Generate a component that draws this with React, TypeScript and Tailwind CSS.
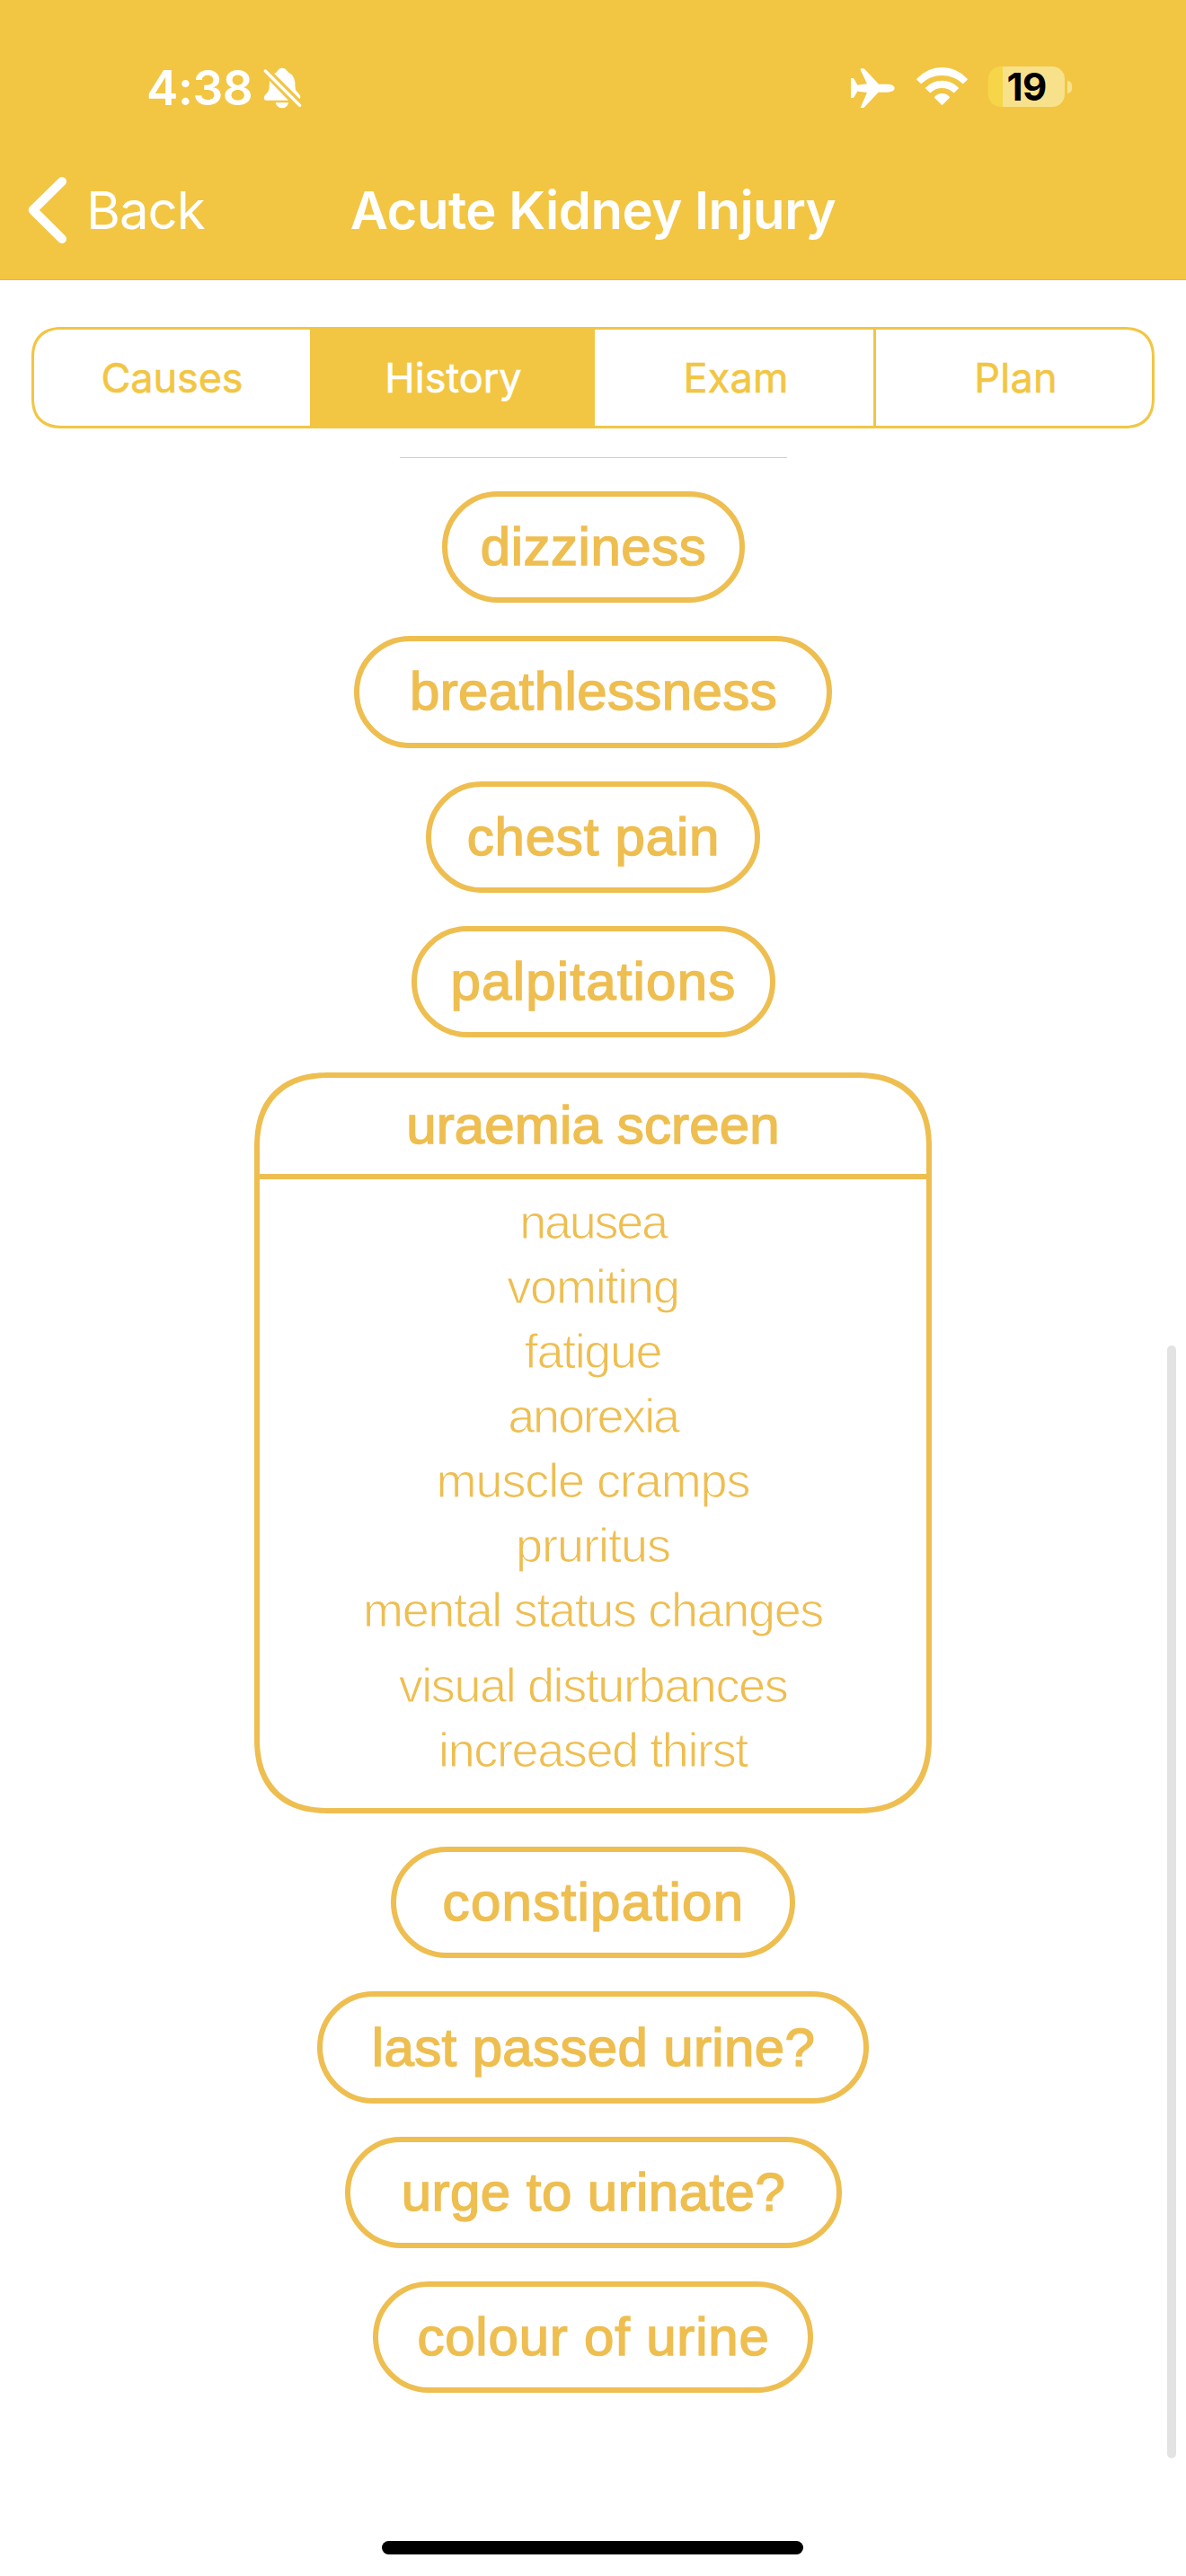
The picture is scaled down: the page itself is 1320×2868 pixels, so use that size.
const tabs = [
  { label: "Causes", cell: "w-[307px] text-[#f2c643]", text: "tracking-[-0.1px]" },
  { label: "History", cell: "w-[317px] bg-[#f2c643] text-white", text: "pl-0.5" },
  { label: "Exam", cell: "w-[313px] border-r-[3px] border-[#f2c643] text-[#f2c643]", text: "pl-1 tracking-[0.2px]" },
  { label: "Plan", cell: "grow text-[#f2c643]", text: "pl-1 tracking-[0.3px]" },
];

const topPills = [
  { label: "dizziness", box: "w-[337px]", text: "tracking-[0.5px]" },
  { label: "breathlessness", box: "w-[532px]", text: "tracking-[0.4px]" },
  { label: "chest pain", box: "w-[372px]", text: "tracking-[0.8px]" },
  { label: "palpitations", box: "w-[405px]", text: "tracking-[1.2px]" },
];

const bottomPills = [
  { label: "constipation", box: "w-[450px]", text: "tracking-[1.3px]" },
  { label: "last passed urine?", box: "w-[614px]", text: "tracking-[0.35px]" },
  { label: "urge to urinate?", box: "w-[553px]", text: "tracking-[0.45px]" },
  { label: "colour of urine", box: "w-[490px]", text: "tracking-[0.8px]" },
];

const symptoms = [
  { label: "nausea", text: "tracking-[-2.3px]" },
  { label: "vomiting", text: "tracking-[-1.2px]" },
  { label: "fatigue", text: "tracking-[-1.4px]" },
  { label: "anorexia", text: "tracking-[-2.2px]" },
  { label: "muscle cramps", text: "tracking-[-1.1px]" },
  { label: "pruritus", text: "tracking-[-1px]" },
  { label: "mental status changes", text: "tracking-[-1.35px]" },
  { label: "visual disturbances", text: "mt-3 tracking-[-1.4px]" },
  { label: "increased thirst", text: "tracking-[-1.4px]" },
];

function Pill({ label, box, text }: { label: string; box: string; text: string }) {
  return (
    <div className={`flex h-[124.3px] items-center justify-center rounded-full border-[6px] border-[#eebe50] ${box}`}>
      <span className={`whitespace-nowrap pl-px text-[60px] leading-none [-webkit-text-stroke:1.5px_#eebe50] ${text}`}>{label}</span>
    </div>
  );
}

function BellOff() {
  return (
    <svg className="h-[46px] w-[43px]" viewBox="880 105 129 138" fill="white">
      <path d="M917 126Q926 121 928 116Q933 107 943 107Q953 107 960 117Q963 122 969 125Q983 132 986 155Q986 177 990 184Q1004 197 1004 205Q1004 209 1001 210Z" />
      <path d="M901 150L964 215H889Q882 214 882 206Q882 199 892 191Q899 186 900 174Z" />
      <path d="M921 223H964Q960 241 943 241Q926 241 921 223Z" />
      <path d="M887 117L1002 232" stroke="white" strokeWidth="10" strokeLinecap="round" />
    </svg>
  );
}

function Airplane() {
  return (
    <svg className="h-11 w-[49px]" viewBox="201 108 147 132" fill="white">
      <path d="M201 141H207Q210 141 212 144L223 164L255 160L233 113Q232 109 236 109H242Q245 109 248 112L294 161H325Q347 163 347 174Q347 186 325 188H293L247 237Q245 240 242 240H233L255 189L223 185L212 204Q210 207 207 207H201Z" />
    </svg>
  );
}

function Wifi() {
  return (
    <svg className="h-[42px] w-[57px]" viewBox="420 105 171 126" fill="white">
      <path d="M421 143Q457 105 505 105Q554 105 590 143Q591 145 590 146L577 159Q575 160 574 159Q545 132 505 132Q466 132 437 159Q435 160 434 159L421 146Q420 145 421 143Z" />
      <path d="M450 173Q474 149 505 149Q537 149 561 173Q562 174 561 175L546 190Q545 191 544 190Q527 174 505 174Q484 174 467 190Q466 191 465 190L450 175Q449 174 450 173Z" />
      <path d="M480 204Q490 192 505 192Q521 192 531 204Q532 205 531 206L507 230Q505 231 504 230L480 206Q479 205 480 204Z" />
    </svg>
  );
}

export default function App() {
  return (
    <div className="relative flex h-[2868px] w-[1320px] flex-col overflow-hidden bg-white font-['Inter',sans-serif]">
      <header className="flex h-[312px] shrink-0 flex-col border-b border-[#b9b7a8] bg-[#f2c643] text-white">
        <div className="flex h-[196px] items-center pl-[163px] pr-[127px]">
          <span className="text-[53px] font-semibold leading-none tracking-[-0.4px]">4:38</span>
          <div className="ml-auto flex items-center">
            <Airplane />
          </div>
          <div className="ml-6 flex items-center pb-1">
            <Wifi />
          </div>
          <div className="ml-[23px] flex items-center gap-[3px] pb-[3px]">
            <div className="flex h-[45px] w-[85px] items-center justify-center rounded-[14px] bg-[linear-gradient(to_right,#f6d648_16px,#f8e18b_16px)] text-[42px] font-bold leading-[45px] tracking-[-0.8px] text-black">
              19
            </div>
            <div className="h-[14px] w-[5px] rounded-r-full bg-[#f8e18b]" />
          </div>
          <div className="absolute left-[293px] top-[75px]">
            <BellOff />
          </div>
        </div>
        <div className="grid h-[76px] grid-cols-[1fr_auto_1fr] items-center">
          <div className="flex items-center gap-[22px] pl-[31px]">
            <svg className="h-[74px] w-[43px]" viewBox="93 470 129 222" fill="none">
              <path d="M207 485L110 580.500L207 677" stroke="white" strokeWidth="30" strokeLinecap="round" strokeLinejoin="round" />
            </svg>
            <span className="text-[58px] leading-none tracking-[-1px]">Back</span>
          </div>
          <h1 className="whitespace-nowrap text-[58px] font-semibold leading-none tracking-[-0.5px]">Acute Kidney Injury</h1>
        </div>
      </header>

      <nav className="mx-[35px] mt-[52px] flex h-[113px] shrink-0 overflow-hidden rounded-[34px] border-[3.5px] border-[#f2c643] [corner-shape:superellipse(1.25)]">
        {tabs.map((t) => (
          <div key={t.label} className={`flex items-center justify-center text-[45px] leading-none [-webkit-text-stroke:0.6px_currentColor] ${t.cell}`}>
            <span className={t.text}>{t.label}</span>
          </div>
        ))}
      </nav>

      <main className="mt-8 flex flex-col items-center font-['Liberation_Sans',Arial,sans-serif] text-[#eebe50]">
        <div className="h-px w-[431px] bg-[#f3cd78]" />
        <div className="mt-[37px] flex flex-col items-center gap-[37px]">
          {topPills.map((p) => (
            <Pill key={p.label} {...p} />
          ))}
          <section className="mt-[1.5px] flex h-[825.5px] w-[754px] flex-col rounded-[84px] border-[6px] border-[#eebe50] [corner-shape:superellipse(1.25)]">
            <h2 className="flex h-[113px] shrink-0 items-center justify-center border-b-[6px] border-[#eebe50] text-[60px] leading-none tracking-[0.15px] [-webkit-text-stroke:1.5px_#eebe50]">
              uraemia screen
            </h2>
            <ul className="flex flex-col items-center pt-[11px]">
              {symptoms.map((s) => (
                <li
                  key={s.label}
                  className={`h-[72px] whitespace-nowrap text-[54px] leading-[72px] [-webkit-text-stroke:1px_white] ${s.text}`}
                >
                  {s.label}
                </li>
              ))}
            </ul>
          </section>
          {bottomPills.map((p) => (
            <Pill key={p.label} {...p} />
          ))}
        </div>
      </main>

      <div className="absolute left-[1299px] top-[1498px] h-[1239px] w-[10px] rounded-full bg-[#e3e3e3]" />
      <div className="absolute bottom-6 left-[425px] h-[15px] w-[469px] rounded-full bg-black" />
    </div>
  );
}
